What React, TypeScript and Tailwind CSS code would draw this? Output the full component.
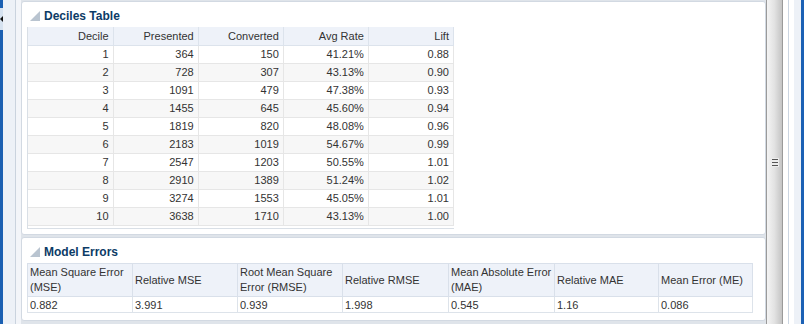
const DECILES: [number, number, number, string, string][] = [
  [1, 364, 150, "41.21%", "0.88"],
  [2, 728, 307, "43.13%", "0.90"],
  [3, 1091, 479, "47.38%", "0.93"],
  [4, 1455, 645, "45.60%", "0.94"],
  [5, 1819, 820, "48.08%", "0.96"],
  [6, 2183, 1019, "54.67%", "0.99"],
  [7, 2547, 1203, "50.55%", "1.01"],
  [8, 2910, 1389, "51.24%", "1.02"],
  [9, 3274, 1553, "45.05%", "1.01"],
  [10, 3638, 1710, "43.13%", "1.00"],
];

const ERROR_COLS = [
  { label: "Mean Square Error (MSE)", value: "0.882", w: "w-[105px]" },
  { label: "Relative MSE", value: "3.991", w: "w-[105px]" },
  { label: "Root Mean Square Error (RMSE)", value: "0.939", w: "w-[105px]" },
  { label: "Relative RMSE", value: "1.998", w: "w-[106px]" },
  { label: "Mean Absolute Error (MAE)", value: "0.545", w: "w-[106px]" },
  { label: "Relative MAE", value: "1.16", w: "w-[104px]" },
  { label: "Mean Error (ME)", value: "0.086", w: "w-[94px]" },
];

function DiscloseIcon() {
  return (
    <svg width="10" height="10" viewBox="0 0 10 10" className="shrink-0">
      <polygon points="10,0 10,10 0,10" fill="#b9c4d0" />
    </svg>
  );
}

function PanelTitle({ children }: { children: string }) {
  return (
    <div className="flex h-[25px] items-center gap-[4px] pl-[8px] pt-[3px]">
      <DiscloseIcon />
      <span className="text-[12px] font-bold text-[#0c3b66]">{children}</span>
    </div>
  );
}

function DecilesTable() {
  const head = ["Decile", "Presented", "Converted", "Avg Rate", "Lift"];
  return (
    <div className="ml-[5px] w-[427px] border-l border-b border-[#d9dfe6] pb-[2px]">
      <table className="w-[426px] table-fixed border-collapse text-[11px] text-[#333]">
        <thead>
          <tr className="h-[18px] bg-[#eef2f9]">
            {head.map((h) => (
              <th
                key={h}
                className="w-[85px] border-r border-b border-[#dce3ec] pr-[4px] text-right font-normal"
              >
                {h}
              </th>
            ))}
          </tr>
        </thead>
        <tbody>
          {DECILES.map((row, i) => (
            <tr key={row[0]} className={`h-[18px] ${i % 2 ? "bg-[#f7f7f7]" : "bg-white"}`}>
              {row.map((cell, j) => (
                <td
                  key={j}
                  className="border-r border-b border-[#e6e6e6] pr-[4px] text-right tabular-nums"
                >
                  {cell}
                </td>
              ))}
            </tr>
          ))}
        </tbody>
      </table>
    </div>
  );
}

function ErrorsTable() {
  return (
    <table className="ml-[5px] w-[726px] table-fixed border-collapse text-[11px] text-[#333]">
      <thead>
        <tr className="h-[33px] bg-[#eef2f9]">
          {ERROR_COLS.map((c) => (
            <th
              key={c.label}
              className={`${c.w} border border-[#d9e0ea] pl-[2px] text-left align-middle font-normal leading-[15px]`}
            >
              {c.label}
            </th>
          ))}
        </tr>
      </thead>
      <tbody>
        <tr className="h-[16px] bg-white">
          {ERROR_COLS.map((c) => (
            <td key={c.label} className="border border-[#dde3ea] pl-[2px] leading-[14px]">
              {c.value}
            </td>
          ))}
        </tr>
      </tbody>
    </table>
  );
}

function LeftEdge() {
  return (
    <div className="flex h-full shrink-0">
      <div className="flex w-[3px] flex-col bg-[#1b60b2]">
        <div className="mt-[8px] flex h-[22px] items-center bg-[#d6e2f0]">
          <svg width="3" height="6" viewBox="0 0 3 6">
            <polygon points="3,0 3,6 0,3" fill="#111" />
          </svg>
        </div>
      </div>
      <div className="w-[12px] bg-[#edf1f7]" />
      <div className="w-px bg-[#cad3de]" />
      <div className="w-[5px] bg-[#f3f5f9]" />
    </div>
  );
}

function Scrollbar() {
  return (
    <div className="flex h-full w-[17px] shrink-0 flex-col items-center justify-center border-l border-r border-[#9a9a9a] bg-gradient-to-r from-[#f4f4f4] via-[#e2e2e2] to-[#c4c4c4]">
      <div className="flex h-[9px] w-[8px] flex-col justify-between bg-[#ececec] px-[1px] py-[1px]">
        <div className="h-px bg-[#555]" />
        <div className="h-px bg-[#555]" />
        <div className="h-px bg-[#555]" />
      </div>
    </div>
  );
}

function RightEdge() {
  return (
    <div className="flex h-full shrink-0">
      <div className="w-[5px] bg-white" />
      <div className="w-px bg-[#cbd5e1]" />
      <div className="w-[5px] bg-white" />
      <div className="w-[7px] bg-[#edf1f7]" />
      <div className="w-[3px] bg-[#1c61b5]" />
    </div>
  );
}

export default function App() {
  return (
    <div className="flex h-[324px] w-[804px] overflow-hidden bg-[#dfe4ea] font-['Liberation_Sans',Arial,sans-serif]">
      <LeftEdge />
      <div className="flex w-[745px] shrink-0 flex-col gap-[2px] pt-px">
        <section className="h-[234px] rounded-[3px] border border-[#d2d9e2] bg-white">
          <PanelTitle>Deciles Table</PanelTitle>
          <DecilesTable />
        </section>
        <section className="h-[84px] rounded-[3px] border border-[#d2d9e2] bg-white">
          <PanelTitle>Model Errors</PanelTitle>
          <ErrorsTable />
        </section>
      </div>
      <div className="w-px bg-[#dfe4ea]" />
      <Scrollbar />
      <RightEdge />
    </div>
  );
}
